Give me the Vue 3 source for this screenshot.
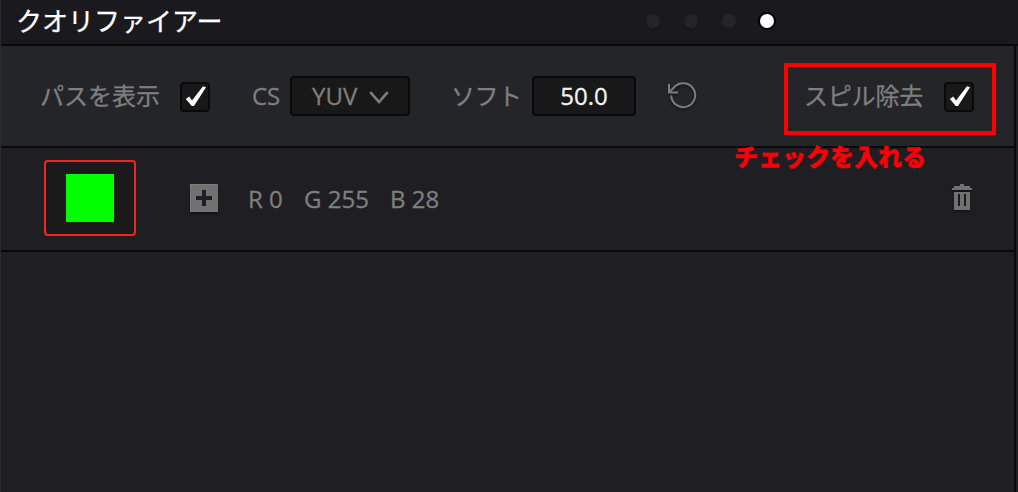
<template>
  <div class="qualifier">
    <header class="header">
      <h1>クオリファイアー</h1>
      <div class="pages">
        <span
          v-for="page in 4"
          :key="page"
          class="dot"
          :class="{ active: page === activePage }"
          @click="activePage = page"
        ></span>
      </div>
    </header>

    <div class="body">
      <div class="toolbar">
        <span class="label path-label">パスを表示</span>
        <button class="checkbox" @click="showPath = !showPath">
          <svg v-if="showPath" width="26" height="26" viewBox="0 0 26 26">
            <path d="M3.8 15L7.3 12.5L10 16.5L21 2.2L24 3.2L12 22H9.8Z" fill="#fff" />
          </svg>
        </button>

        <span class="label cs-label">CS</span>
        <button class="select">
          <span>{{ colorSpace }}</span>
          <svg
            width="20"
            height="14"
            viewBox="0 0 20 14"
            fill="none"
            stroke="#7d7d7d"
            stroke-width="2.6"
            stroke-linecap="round"
          >
            <path d="M2 1.8L10 11L18 1.8"></path>
          </svg>
        </button>

        <span class="label soft-label">ソフト</span>
        <div class="number">{{ softness.toFixed(1) }}</div>
        <button class="reset" @click="softness = 50">
          <svg width="30" height="30" viewBox="0 0 30 30" fill="none" stroke="#7d7d7d" stroke-width="2">
            <path d="M4.2 15.5A12 12 0 1 0 7.2 7.2L2.5 12"></path>
            <path d="M2 4V12.5H11"></path>
          </svg>
        </button>

        <div class="spill">
          <span class="label spill-label">スピル除去</span>
          <button class="checkbox" @click="despill = !despill">
            <svg v-if="despill" width="26" height="26" viewBox="0 0 26 26">
              <path d="M3.8 15L7.3 12.5L10 16.5L21 2.2L24 3.2L12 22H9.8Z" fill="#fff" />
            </svg>
          </button>
          <span class="note">チェックを入れる</span>
        </div>
      </div>

      <div class="sample">
        <div class="swatch"><div class="color"></div></div>
        <button class="add">
          <svg width="28" height="28" viewBox="0 0 28 28">
            <rect width="28" height="28" fill="#717171" />
            <path d="M.5 28V.5H28" fill="none" stroke="#7c7c7c" />
            <path d="M12 6h4v6h6v4h-6v6h-4v-6H6v-4h6z" fill="#1f1e22" />
          </svg>
        </button>
        <span class="channel red">R 0</span>
        <span class="channel green">G 255</span>
        <span class="channel blue">B 28</span>
        <button class="delete">
          <svg width="20" height="26" viewBox="0 0 20 26">
            <path d="M8 0h4v2h6v2h2v2H0V4h2V2h6z" fill="#717171" />
            <path d="M2 8h16v18H2z" fill="#717171" />
            <path d="M6 10h2v12H6zM12 10h2v12h-2z" fill="#1a1a1d" />
          </svg>
        </button>
      </div>
    </div>
  </div>
</template>

<script setup>
import { ref } from 'vue'

const activePage = ref(4)
const showPath = ref(true)
const despill = ref(true)
const colorSpace = ref('YUV')
const softness = ref(50)
</script>

<style>
body {
  background-color: #1f1e22;
}
</style>

<style scoped>
.qualifier {
  display: flex;
  flex-direction: column;
  height: 492px;
  box-sizing: border-box;
  border-left: 1px solid #2b2b2f;
  background-color: #1f1e22;
  color: #7f7f7f;
  font-family: 'Open Sans', 'Noto Sans CJK JP', sans-serif;
  font-size: 24px;
  line-height: 32px;
  white-space: nowrap;
  overflow: hidden;
  -webkit-text-stroke: 0.3px;
}
button {
  padding: 0;
  border: none;
  background: none;
  color: inherit;
  font: inherit;
}
svg {
  display: block;
}
.header {
  display: flex;
  align-items: center;
  height: 46px;
  box-sizing: border-box;
  padding-bottom: 2px;
  border-bottom: 2px solid #09090a;
  background-color: #1a191d;
}
.header h1 {
  width: 645px;
  box-sizing: border-box;
  padding-left: 15px;
  margin: 0;
  color: #fff;
  font-size: 26px;
  font-weight: 400;
}
.pages {
  display: flex;
  align-items: center;
  gap: 24px;
}
.dot {
  width: 14px;
  height: 14px;
  border-radius: 50%;
  background-color: #242429;
}
.dot.active {
  background-color: #fff;
  box-shadow: 0 0 0 2px #000;
}
.body {
  flex: 1;
  margin-right: 2px;
  border-right: 2px solid #09090a;
}
.toolbar {
  display: flex;
  align-items: center;
  height: 100px;
  border-bottom: 2px solid #09090a;
  background-color: #242529;
}
.label {
  flex: none;
}
.path-label {
  width: 140px;
  margin-left: 39px;
}
.cs-label {
  width: 38px;
  margin-left: 42px;
}
.soft-label {
  width: 81px;
  margin-left: 41px;
  letter-spacing: -0.5px;
}
.checkbox {
  flex: none;
  width: 30px;
  height: 30px;
  border: 2px solid #09090a;
  border-radius: 4px;
  background-color: #181818;
  margin-top: 2px;
}
.select,
.number {
  display: flex;
  align-items: center;
  height: 40px;
  box-sizing: border-box;
  border: 2px solid #09090a;
  border-radius: 4px;
  background-color: #181818;
}
.select {
  width: 120px;
  padding-left: 20px;
  gap: 12px;
}
.select svg {
  margin-top: 3px;
}
.number {
  width: 104px;
  justify-content: center;
  color: #f2f2f2;
}
.reset {
  margin: -2px 0 0 31px;
  filter: drop-shadow(0 2px 1px rgba(0, 0, 0, 0.4));
}
.spill {
  position: relative;
  display: flex;
  align-items: center;
  width: 212px;
  height: 72px;
  box-sizing: border-box;
  border: 4px solid #fb0007;
  margin: 6px 18px 0 auto;
}
.spill .checkbox {
  margin-top: -4px;
}
.spill-label {
  width: 140px;
  margin: -6px 0 0 16px;
  letter-spacing: -0.2px;
}
.note {
  position: absolute;
  top: 74px;
  left: -54px;
  color: #fb0007;
  font-weight: 900;
}
.sample {
  display: flex;
  align-items: center;
  height: 102px;
  border-bottom: 2px solid #09090a;
}
.swatch {
  display: flex;
  align-items: center;
  justify-content: center;
  width: 92px;
  height: 76px;
  box-sizing: border-box;
  border: 2px solid #f82126;
  border-radius: 4px;
  margin: -2px 0 0 43px;
  background-color: #1a1a1b;
}
.color {
  width: 48px;
  height: 48px;
  background-color: #00ff00;
}
.add {
  margin: -2px 30px 0 54px;
  filter: drop-shadow(0 2px 1px rgba(0, 0, 0, 0.4));
}
.channel {
  width: 56px;
}
.channel.green {
  width: 86px;
}
.delete {
  margin: -4px 42px 0 auto;
  filter: drop-shadow(0 2px 1px rgba(0, 0, 0, 0.4));
}
</style>
